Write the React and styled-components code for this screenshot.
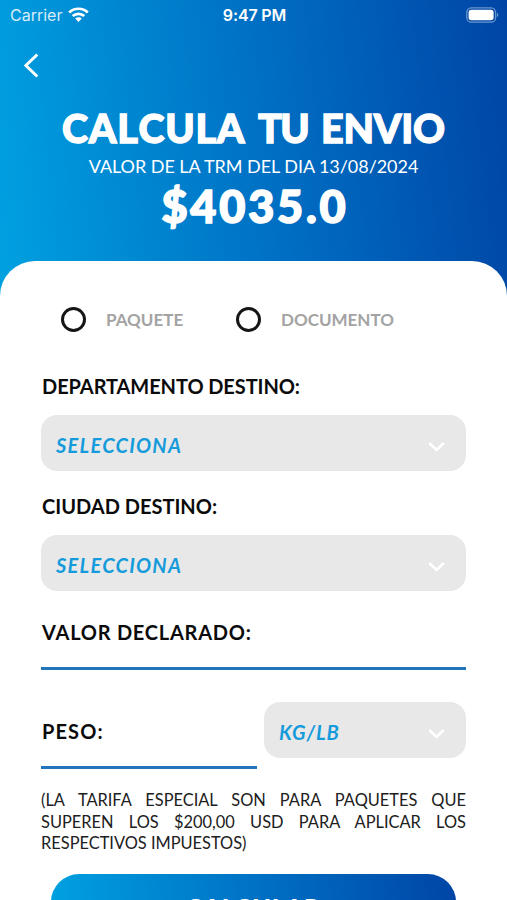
import React from 'react';
import styled, { createGlobalStyle } from 'styled-components';

const brandGradient = 'linear-gradient(84deg, #00a1e1 0%, #0072c5 50%, #0045a6 100%)';

const GlobalStyle = createGlobalStyle`
  *, *::before, *::after { box-sizing: border-box; }
  body { margin: 0; overflow: hidden; background: #fff; font-family: Lato, sans-serif; }
`;

const Screen = styled.main`
  width: 100%;
  max-width: 507px;
  height: 900px;
  overflow: hidden;
  background: #fff;
`;

const Header = styled.header`
  height: 310px;
  background: ${brandGradient};
  color: #fff;
`;

const StatusBar = styled.div`
  display: grid;
  grid-template-columns: 1fr auto 1fr;
  align-items: center;
  height: 30px;
  padding: 0 8px 0 10px;
  font-family: Inter, sans-serif;
  font-size: 16px;
`;

const Carrier = styled.div`
  display: flex;
  align-items: center;
  gap: 6px;
  color: rgba(255, 255, 255, 0.85);
`;

const Clock = styled.time`
  font-weight: 600;
  letter-spacing: -0.15px;
`;

const Battery = styled.svg`
  justify-self: end;
`;

const BackButton = styled.button`
  display: block;
  width: 40px;
  height: 40px;
  margin: 15px 0 0 12px;
  padding: 0;
  border: 0;
  background: none;
  color: #fff;
`;

const Heading = styled.div`
  display: flex;
  flex-direction: column;
  align-items: center;
  margin-top: 19px;
  white-space: nowrap;
`;

const Title = styled.h1`
  margin: 0;
  font-size: 39.5px;
  font-weight: 900;
  line-height: 48px;
  font-kerning: none;
  letter-spacing: -0.2px;
  word-spacing: 3.5px;
  -webkit-text-stroke: 1.3px #fff;
`;

const TitleWord = styled.span`
  letter-spacing: ${(p) => p.$spacing}px;
`;

const RateLabel = styled.p`
  margin: 1px 0 0;
  font-size: 18px;
  line-height: 26px;
  letter-spacing: -0.05px;
`;

const Rate = styled.strong`
  font-size: 45px;
  font-weight: 900;
  line-height: 54px;
  letter-spacing: 2.8px;
  margin-right: -2.8px;
  -webkit-text-stroke: 1.6px #fff;
`;

const Sheet = styled.form`
  position: relative;
  height: 639px;
  margin-top: -49px;
  padding: 45px 41px 0;
  border-radius: 35px 35px 0 0;
  background: #fff;
`;

const Options = styled.div`
  display: flex;
  padding-left: 20px;
`;

const Option = styled.label`
  display: flex;
  align-items: center;
  gap: 20px;
  width: 175px;
  height: 26px;
  color: #a3a3a3;
  font-size: 17px;
  font-weight: 700;
`;

const RadioRing = styled.span`
  flex: none;
  width: 25px;
  height: 25px;
  border: 3px solid #151515;
  border-radius: 50%;
`;

const OptionText = styled.span`
  padding-top: 1px;
`;

const Label = styled.div`
  height: 24px;
  margin-top: ${(p) => p.$top}px;
  padding-left: 1px;
  color: #0b0b0b;
  font-size: 20px;
  font-weight: 700;
  line-height: 24px;
  letter-spacing: ${(p) => p.$spacing || 0}px;
  white-space: nowrap;
`;

const SelectBox = styled.div`
  display: flex;
  align-items: center;
  justify-content: space-between;
  width: ${(p) => (p.$width ? `${p.$width}px` : '100%')};
  height: 56px;
  margin-top: ${(p) => p.$top || 0}px;
  padding: 4px 21px 0 15px;
  border-radius: 16px;
  background: #e8e8e8;
  color: #159bdb;
  font-size: 20px;
  font-style: italic;
  font-weight: 700;
  letter-spacing: ${(p) => p.$spacing || 1.25}px;
`;

const Chevron = styled.svg`
  margin-top: 4px;
`;

const Underline = styled.div`
  width: 100%;
  height: 3px;
  margin-top: ${(p) => p.$top}px;
  background: #2375bb;
`;

const WeightRow = styled.div`
  display: flex;
  justify-content: space-between;
  margin-top: 32px;
`;

const WeightField = styled.div`
  width: 216px;
`;

const Note = styled.p`
  margin: 20px 0 0;
  color: #202020;
  font-size: 16.4px;
  line-height: 21.5px;
  text-align: justify;
`;

const SubmitButton = styled.button`
  display: block;
  width: 405px;
  height: 66px;
  margin: 20px 0 0 10px;
  padding: 0;
  border: 0;
  border-radius: 28px;
  background: ${brandGradient};
  color: #fff;
  font: 900 25px/66px Lato, sans-serif;
  letter-spacing: 0.8px;
`;

const WifiIcon = () => (
  <svg width="21" height="16" viewBox="0 0 21 16" fill="none" stroke="#fff" strokeWidth="2.7">
    <path d="M1.2 5.5C6.3.5 14.7.5 19.8 5.5" />
    <path d="M4.7 9.1C8 6 13 6 16.3 9.1" />
    <path d="M7.2 11.6C9 9.8 12 9.8 13.8 11.6L10.5 14.9Z" fill="#fff" stroke="none" />
  </svg>
);

const ChevronDown = () => (
  <Chevron width="17" height="12" viewBox="0 0 17 12" fill="none" stroke="#fff" strokeWidth="2.5">
    <path d="M1.2 2L8.5 9L15.8 2" />
  </Chevron>
);

const Select = ({ text, ...rest }) => (
  <SelectBox {...rest}>
    {text}
    <ChevronDown />
  </SelectBox>
);

export default function App() {
  return (
    <Screen>
      <GlobalStyle />
      <Header>
        <StatusBar>
          <Carrier>
            Carrier
            <WifiIcon />
          </Carrier>
          <Clock>9:47 PM</Clock>
          <Battery width="33" height="18" viewBox="0 0 33 18">
            <rect x="0.8" y="1.8" width="28.8" height="14.4" rx="4.5" fill="none" stroke="#fff" strokeOpacity="0.42" strokeWidth="1.3" />
            <rect x="2.6" y="3.7" width="25" height="10.6" rx="2.8" fill="#fff" />
            <path d="M31 6.8C32.8 7.6 32.8 10.4 31 11.2Z" fill="#fff" fillOpacity="0.45" />
          </Battery>
        </StatusBar>
        <BackButton type="button" aria-label="Volver">
          <svg width="40" height="40" viewBox="0 0 40 40" fill="none" stroke="#fff" strokeWidth="3">
            <path d="M25.3 9.5L13.9 20.5L25.3 31.5" />
          </svg>
        </BackButton>
        <Heading>
          <Title>
            <TitleWord $spacing={0.7}>CALCULA</TitleWord>{' '}
            <TitleWord $spacing={-1.5}>TU</TitleWord>{' '}
            <TitleWord $spacing={-0.2}>ENVIO</TitleWord>
          </Title>
          <RateLabel>VALOR DE LA TRM DEL DIA 13/08/2024</RateLabel>
          <Rate>$4035.0</Rate>
        </Heading>
      </Header>
      <Sheet>
        <Options>
          <Option><RadioRing /><OptionText>PAQUETE</OptionText></Option>
          <Option><RadioRing /><OptionText>DOCUMENTO</OptionText></Option>
        </Options>
        <Label $top={42} $spacing={-0.08}>DEPARTAMENTO DESTINO:</Label>
        <Select $top={17} text="SELECCIONA" />
        <Label $top={23}>CIUDAD DESTINO:</Label>
        <Select $top={17} text="SELECCIONA" />
        <Label $top={29} $spacing={0.75}>VALOR DECLARADO:</Label>
        <Underline $top={23} />
        <WeightRow>
          <WeightField>
            <Label $top={17} $spacing={1.1}>PESO:</Label>
            <Underline $top={23} />
          </WeightField>
          <Select $width={202} $spacing={0.9} text="KG/LB" />
        </WeightRow>
        <Note>
          (LA TARIFA ESPECIAL SON PARA PAQUETES QUE SUPEREN LOS $200,00 USD PARA APLICAR LOS RESPECTIVOS IMPUESTOS)
        </Note>
        <SubmitButton type="button">CALCULAR</SubmitButton>
      </Sheet>
    </Screen>
  );
}
